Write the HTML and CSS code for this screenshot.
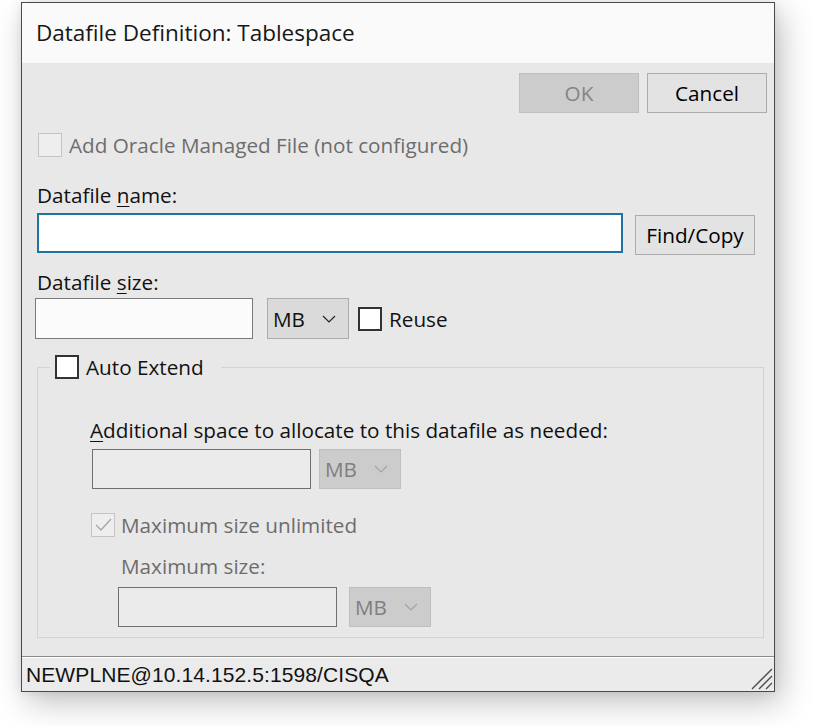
FILE: index.html
```html
<!DOCTYPE html>
<html>
<head>
<meta charset="utf-8">
<title>Datafile Definition</title>
<link rel="stylesheet" href="styles.css">
</head>
<body>
<div class="window">
  <div class="titlebar">Datafile Definition: Tablespace</div>
  <div class="content">
    <div class="actions">
      <button class="btn" disabled>OK</button>
      <button class="btn">Cancel</button>
    </div>
    <div class="check-row omf">
      <span class="cb cb-disabled"></span>
      <span class="muted">Add Oracle Managed File (not configured)</span>
    </div>
    <div class="label name-label">Datafile <u>n</u>ame:</div>
    <div class="name-row">
      <input class="field field-focus name-field" type="text">
      <button class="btn find">Find/Copy</button>
    </div>
    <div class="label size-label">Datafile <u>s</u>ize:</div>
    <div class="size-row">
      <input class="field size-field" type="text">
      <div class="select">
        <span>MB</span>
        <svg class="chev" width="14" height="8" viewBox="0 0 14 8"><polyline points="1,1 7,7 13,1" fill="none" stroke="#222" stroke-width="1.2"/></svg>
      </div>
      <span class="cb reuse-cb"></span>
      <span class="reuse-text">Reuse</span>
    </div>
    <fieldset class="group">
      <legend class="legend"><span class="cb"></span><span>Auto Extend</span></legend>
      <div class="label add-label"><u>A</u>dditional space to allocate to this datafile as needed:</div>
      <div class="pair add-row">
        <input class="field field-disabled" type="text" disabled>
        <div class="select select-disabled">
          <span>MB</span>
          <svg class="chev" width="14" height="8" viewBox="0 0 14 8"><polyline points="1,1 7,7 13,1" fill="none" stroke="#a3a3a3" stroke-width="1.2"/></svg>
        </div>
      </div>
      <div class="check-row unl-row">
        <span class="cb cb-disabled">
          <svg width="22" height="22" viewBox="0 0 22 22"><polyline points="4,11 9,16 19,5" fill="none" stroke="#a8a8a8" stroke-width="1.4"/></svg>
        </span>
        <span class="muted">Maximum size unlimited</span>
      </div>
      <div class="label muted max-label">Maximum size:</div>
      <div class="pair max-row">
        <input class="field field-disabled" type="text" disabled>
        <div class="select select-disabled">
          <span>MB</span>
          <svg class="chev" width="14" height="8" viewBox="0 0 14 8"><polyline points="1,1 7,7 13,1" fill="none" stroke="#a3a3a3" stroke-width="1.2"/></svg>
        </div>
      </div>
    </fieldset>
  </div>
  <div class="separator"></div>
  <div class="status">
    <span class="status-text">NEWPLNE@10.14.152.5:1598/CISQA</span>
    <svg class="grip" width="22" height="22" viewBox="0 0 22 22">
      <line x1="1" y1="21" x2="21" y2="1" stroke="#4a4a4a" stroke-width="1.3"/>
      <line x1="8" y1="21" x2="21" y2="8" stroke="#4a4a4a" stroke-width="1.3"/>
      <line x1="15" y1="21" x2="21" y2="15" stroke="#4a4a4a" stroke-width="1.3"/>
    </svg>
  </div>
</div>
</body>
</html>
```

FILE: styles.css
```css
* { box-sizing: border-box; }

html, body {
  margin: 0;
  padding: 0;
}

body {
  width: 820px;
  height: 726px;
  overflow: hidden;
  background: #ffffff;
  font-family: "Open Sans", "Noto Sans", sans-serif;
  font-size: 20.7px;
  color: #111111;
}

.window {
  margin: 2px 0 0 21px;
  width: 754px;
  height: 690px;
  border: 1px solid #4a4a4a;
  display: flex;
  flex-direction: column;
  box-shadow: 6px 10px 30px rgba(0, 0, 0, 0.25), 0 0 10px rgba(0, 0, 0, 0.08);
}

.titlebar {
  height: 60px;
  flex: none;
  background: #fafafa;
  padding-left: 14px;
  line-height: 60px;
  font-size: 22.5px;
  color: #171717;
}

.content {
  height: 593px;
  flex: none;
  background: #e9e8e8;
  padding: 10px 7px 0 15px;
  display: flex;
  flex-direction: column;
  align-items: flex-start;
}

.actions {
  align-self: stretch;
  display: flex;
  justify-content: flex-end;
  gap: 8px;
}

.btn {
  width: 120px;
  height: 40px;
  margin: 0;
  padding: 0;
  font-family: inherit;
  font-size: 20.7px;
  line-height: 38px;
  color: #000;
  background: #e3e3e3;
  border: 1px solid #acacac;
  border-radius: 0;
}

.btn:disabled {
  background: #cccccc;
  border-color: #bfbfbf;
  color: #858585;
}

.cb {
  width: 24px;
  height: 24px;
  flex: none;
  background: #ffffff;
  border: 2px solid #333333;
  display: inline-flex;
  align-items: center;
  justify-content: center;
}

.cb-disabled {
  background: #eeeeee;
  border: 1px solid #c4c4c4;
}

.muted { color: #6d6d6d; }

.check-row {
  display: flex;
  align-items: center;
  gap: 7px;
  line-height: 24px;
}

.omf {
  margin-top: 20px;
  margin-left: 1px;
}

.label {
  line-height: 24px;
  white-space: nowrap;
}

.label u {
  text-decoration-thickness: 1px;
  text-underline-offset: 3px;
}

.name-label { margin-top: 26px; }

.name-row {
  margin-top: 6px;
  display: flex;
  align-items: flex-start;
  gap: 12px;
}

.field {
  margin: 0;
  padding: 0 6px;
  height: 40px;
  font-family: inherit;
  font-size: 20px;
  background: #fbfbfb;
  border: 1px solid #7a7a7a;
  border-radius: 0;
  outline: none;
}

.field-focus {
  border: 2px solid #1f73a3;
  background: #ffffff;
}

.name-field { width: 586px; }

.find { margin-top: 2px; }

.size-label { margin-top: 15px; }

.size-row {
  margin-top: 4px;
  display: flex;
  align-items: center;
}

.size-field {
  width: 218px;
  height: 41px;
  margin-left: -2px;
}

.select {
  width: 82px;
  height: 41px;
  margin-left: 14px;
  background: #dadada;
  border: 1px solid #adadad;
  display: flex;
  align-items: center;
  justify-content: space-between;
  padding: 0 12px 0 5px;
  color: #111;
}

.chev { display: block; }

.reuse-cb { margin-left: 9px; }

.reuse-text { margin-left: 7px; }

.group {
  margin: 16px 0 0 0;
  padding: 0 0 10px 0;
  width: 727px;
  min-width: 0;
  border: 1px solid #d3d3d3;
  display: flex;
  flex-direction: column;
  align-items: flex-start;
}

.legend {
  margin-left: 12px;
  padding: 0 17px 0 5px;
  display: flex;
  align-items: center;
  gap: 7px;
  line-height: 24px;
}

.add-label { margin: 39px 0 0 52px; }

.pair {
  display: flex;
  align-items: center;
}

.add-row {
  margin: 7px 0 0 54px;
}

.field-disabled {
  width: 219px;
  background: #ebebeb;
  border: 1px solid #6f6f6f;
}

.select-disabled {
  height: 40px;
  margin-left: 8px;
  background: #cccccc;
  border-color: #bfbfbf;
  color: #7f7f7f;
}

.unl-row {
  margin: 24px 0 0 53px;
  gap: 6px;
}

.max-label { margin: 17px 0 0 83px; }

.max-row { margin: 9px 0 0 80px; }

.max-row .select-disabled { margin-left: 12px; }

.separator {
  height: 2px;
  flex: none;
  border-top: 1px solid #8a8a8a;
  border-bottom: 1px solid #ffffff;
}

.status {
  height: 33px;
  flex: none;
  background: #ebebeb;
  display: flex;
  align-items: center;
  padding-left: 4px;
}

.status-text {
  font-family: "Liberation Sans", Arial, sans-serif;
  font-size: 21px;
  letter-spacing: 0.1px;
  line-height: 31px;
  color: #111;
}

.grip {
  margin-left: auto;
  margin-right: 1px;
  align-self: flex-end;
  margin-bottom: 1px;
}
```
